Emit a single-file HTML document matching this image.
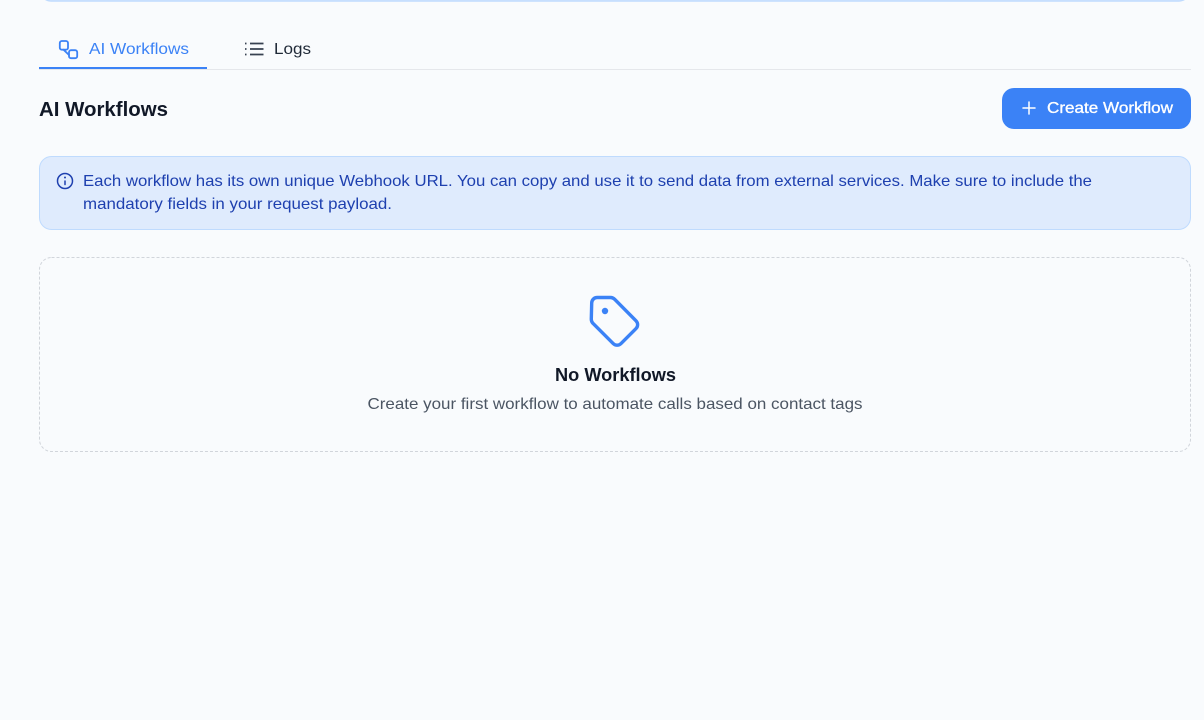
<!DOCTYPE html>
<html><head><meta charset="utf-8"><style>
html,body{margin:0;padding:0;width:1204px;height:720px;overflow:hidden;background:#f9fbfd}
svg{display:block}
text{font-family:"Liberation Sans",sans-serif}
</style></head><body>
<svg width="1204" height="720" viewBox="0 0 1204 720" xmlns="http://www.w3.org/2000/svg">
<rect width="1204" height="720" fill="#f9fbfd"/>
<rect x="39.500" y="-40" width="1151" height="41" rx="12" fill="#dfebfd" stroke="#bfdbfe" stroke-width="1.500"/>
<rect x="39" y="69" width="1152" height="1" fill="#e5e7eb"/>
<rect x="39" y="67" width="168" height="2" fill="#3b82f6"/>
<g fill="none" stroke="#3b82f6" stroke-width="1.800" stroke-linejoin="round" stroke-linecap="round">
<rect x="59.800" y="41" width="8.200" height="8.700" rx="2"/>
<rect x="69" y="50.200" width="8.200" height="8" rx="2"/>
<path d="M63.500 49.700l5.500 5.300"/>
</g>
<text x="89" y="54" font-size="16" fill="#3b82f6" textLength="100" lengthAdjust="spacingAndGlyphs">AI Workflows</text>
<g fill="none" stroke="#374151" stroke-width="1.700">
<path d="M250 43.500h13.500M250 49h13.500M250 54.500h13.500"/>
<path d="M245 43.500h1.500M245 49h1.500M245 54.500h1.500"/>
</g>
<text x="274" y="54" font-size="16" fill="#1f2937" textLength="37" lengthAdjust="spacingAndGlyphs">Logs</text>
<text x="39" y="116" font-size="20.500" font-weight="700" fill="#111827" textLength="129" lengthAdjust="spacingAndGlyphs">AI Workflows</text>
<rect x="1002" y="88" width="189" height="41" rx="12" fill="#3b82f6"/>
<path d="M1029 102v12M1023 108h12" stroke="#fff" stroke-width="1.500" fill="none" stroke-linecap="round"/>
<text x="1047" y="113" font-size="16" fill="#fff" stroke="#fff" stroke-width="0.350" textLength="126" lengthAdjust="spacingAndGlyphs">Create Workflow</text>
<rect x="39.500" y="156.500" width="1151" height="73" rx="12" fill="#dfebfd" stroke="#bfdbfe"/>
<g fill="none" stroke="#1e40af" stroke-width="1.500" stroke-linecap="round">
<circle cx="65" cy="181" r="7.500"/>
<path d="M65 181v3.500"/>
</g>
<circle cx="65" cy="177.500" r="1" fill="#1e40af"/>
<text x="83" y="186" font-size="16" fill="#1e40af" textLength="1009" lengthAdjust="spacingAndGlyphs">Each workflow has its own unique Webhook URL. You can copy and use it to send data from external services. Make sure to include the</text>
<text x="83" y="209" font-size="16" fill="#1e40af" textLength="309" lengthAdjust="spacingAndGlyphs">mandatory fields in your request payload.</text>
<rect x="39.500" y="257.500" width="1151" height="194" rx="12" fill="none" stroke="#d1d5db" stroke-dasharray="3 2"/>
<path d="M591.700 303a5.500 5.500 0 0 1 5.500-5.500h13.300a6 6 0 0 1 4.200 1.800l21.300 21.500a5.500 5.500 0 0 1 0 7.800l-15 15a5.500 5.500 0 0 1-7.800 0l-20.500-20.500a6 6 0 0 1-1.400-4z" fill="none" stroke="#3b82f6" stroke-width="3.400" stroke-linejoin="round"/>
<circle cx="605" cy="311" r="3.200" fill="#3b82f6"/>
<text x="555" y="381" font-size="18.500" font-weight="700" fill="#111827" textLength="121" lengthAdjust="spacingAndGlyphs">No Workflows</text>
<text x="367.500" y="409" font-size="16" fill="#4b5563" textLength="495" lengthAdjust="spacingAndGlyphs">Create your first workflow to automate calls based on contact tags</text>
</svg>
</body></html>
